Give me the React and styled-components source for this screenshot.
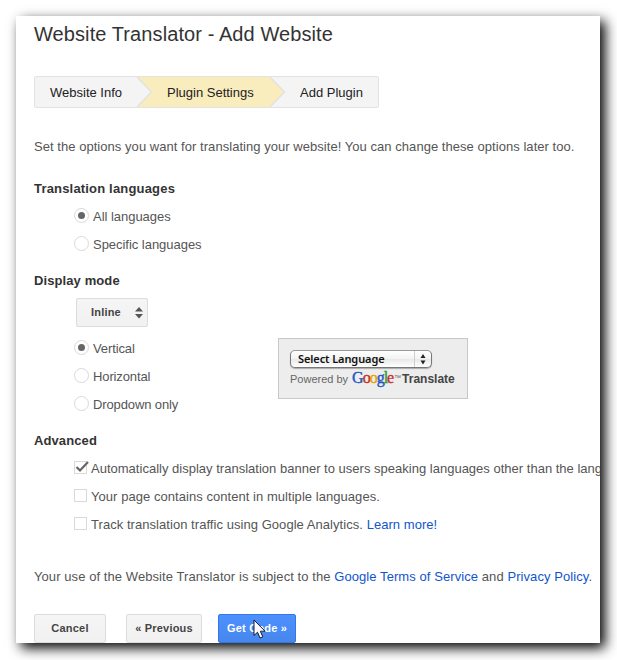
import { useState } from "react"
import styled, { createGlobalStyle } from "styled-components"

const GlobalStyle = createGlobalStyle`
  body {
    margin: 0;
    background: #fff;
    overflow: hidden;
  }
  * {
    box-sizing: border-box;
  }
`;

const Page = styled.div`
  height: 660px;
  padding: 16px;
  font-family: "Liberation Sans", Arial, sans-serif;
  font-size: 13px;
  color: #555;
`;

const Panel = styled.div`
  width: 584px;
  height: 627px;
  padding-left: 18px;
  overflow: hidden;
  background: #fff;
  box-shadow: 5px 5px 12px #000;
`;

const Title = styled.h1`
  height: 36px;
  margin: 0 0 24px;
  font-size: 20px;
  font-weight: 400;
  line-height: 36px;
  letter-spacing: 0.09px;
  color: #333;
`;

const Steps = styled.div`
  display: flex;
  width: 345px;
  height: 32px;
  border: 1px solid #e2e2e2;
  border-radius: 2px;
  background: #f4f4f4;
`;

const Step = styled.div`
  display: flex;
  justify-content: space-between;
  width: ${(props) => props.width}px;
  padding-left: ${(props) => props.indent}px;
  line-height: 31px;
  color: #222;
  white-space: nowrap;
  background: ${(props) => (props.active ? "#f9edbe" : "#f4f4f4")};
`;

const Text = styled.p`
  margin: ${(props) => props.top}px 0 0;
  line-height: 28px;
  letter-spacing: ${(props) => props.spacing}px;
  white-space: nowrap;
`;

const Heading = styled.h2`
  margin: ${(props) => props.top}px 0 0;
  padding-top: 1px;
  height: 28px;
  font-size: 13px;
  font-weight: 700;
  line-height: 28px;
  letter-spacing: ${(props) => props.spacing || 0.1}px;
  color: #333;
`;

const Options = styled.div`
  padding-left: 40px;
`;

const Option = styled.label`
  display: flex;
  align-items: center;
  gap: ${(props) => props.gap}px;
  height: 28px;
  letter-spacing: ${(props) => props.spacing}px;
  white-space: nowrap;
`;

const Radio = styled.span`
  display: flex;
  align-items: center;
  justify-content: center;
  width: 15px;
  height: 15px;
  margin-bottom: 2px;
  border: 1px solid #d9d9d9;
  border-radius: 50%;
  &::after {
    content: "";
    width: 7px;
    height: 7px;
    border-radius: 50%;
    background: ${(props) => (props.checked ? "#666" : "transparent")};
  }
`;

const Checkbox = styled.span`
  width: 13px;
  height: 13px;
  margin-bottom: 2px;
  border: 1px solid #d9d9d9;
  svg {
    display: block;
    overflow: visible;
  }
`;

const Link = styled.a`
  color: #15c;
  text-decoration: none;
`;

const Button = styled.button`
  width: ${(props) => props.width}px;
  height: 29px;
  padding: 0;
  border: 1px solid ${(props) => (props.primary ? "#3079ed" : "#dcdcdc")};
  border-radius: 2px;
  font-family: inherit;
  font-size: 11px;
  font-weight: 700;
  line-height: 27px;
  letter-spacing: 0.2px;
  color: ${(props) => (props.primary ? "#fff" : "#444")};
  background: ${(props) =>
    props.primary
      ? "linear-gradient(#4d90fe, #4787ed)"
      : "linear-gradient(#f5f5f5, #f1f1f1)"};
`;

const ModeSelect = styled(Button)`
  display: flex;
  align-items: center;
  justify-content: space-between;
  margin: 4px 0 7px 42px;
  padding: 0 4px 0 14px;
`;

const DisplayRow = styled.div`
  display: flex;
  align-items: flex-start;
`;

const ModeOptions = styled(Options)`
  width: 244px;
`;

const Preview = styled.div`
  width: 190px;
  height: 61px;
  margin-top: 4px;
  padding: 11px 0 0 11px;
  border: 1px solid #c8c8c8;
  background: #ededed;
`;

const LanguageSelect = styled.div`
  display: flex;
  width: 142px;
  height: 18px;
  border: 1px solid #777;
  border-top-color: #999;
  border-radius: 5px;
  background: linear-gradient(#fff, #f3f3f3 50%, #e8e8e8 51%, #fff);
  box-shadow: 0 1px 1px #aaa;
  font-family: "Noto Sans", sans-serif;
  font-size: 11px;
  font-weight: 600;
  line-height: 16px;
  letter-spacing: -0.1px;
  color: #111;
`;

const LanguageLabel = styled.span`
  width: 124px;
  padding-left: 7px;
  border-right: 1px solid #ccc;
`;

const Powered = styled.div`
  display: flex;
  align-items: baseline;
  font-size: 11px;
  line-height: 20px;
  color: #666;
  white-space: nowrap;
`;

const Logo = styled.span`
  width: 42px;
  margin-left: 4px;
  font-family: "Liberation Serif", serif;
  font-size: 16px;
  letter-spacing: -1px;
`;

const Letter = styled.span`
  color: ${(props) => props.color};
  -webkit-text-stroke: 0.4px ${(props) => props.color};
`;

const Trademark = styled.span`
  width: 8px;
  font-size: 7px;
  position: relative;
  top: -3px;
`;

const Product = styled.b`
  font-size: 12px;
  color: #444;
`;

const Buttons = styled.div`
  display: flex;
  margin-top: 23px;
`;

const PreviousButton = styled(Button)`
  margin: 0 16px 0 20px;
`;

const Primary = styled.div`
  position: relative;
`;

const Cursor = styled.svg`
  position: absolute;
  left: 35px;
  top: 5px;
`;

const Chevron = ({ from, to }) => (
  <svg width="16" height="30">
    <path d="M0 0H16V30H0Z" fill={to} />
    <path d="M0 0L14.5 15L0 30Z" fill={from} />
    <path d="M0 0L14.5 15L0 30" fill="none" stroke="#e0e0e0" strokeWidth="1.3" />
  </svg>
);

const Arrows = ({ width, height, color }) => (
  <svg width={width} height={height} viewBox="0 0 8 12">
    <path d="M4 0L8 4.5H0Z M0 7H8L4 11.5Z" fill={color} />
  </svg>
);

const googleLetters = [
  ["G", "#2456c4"],
  ["o", "#c9302c"],
  ["o", "#dfa800"],
  ["g", "#2456c4"],
  ["l", "#2f9a3b"],
  ["e", "#c9302c"],
];

const languageOptions = ["All languages", "Specific languages"];
const modes = ["Vertical", "Horizontal", "Dropdown only"];

const App = () => {
  const [language, setLanguage] = useState(languageOptions[0])
  const [mode, setMode] = useState(modes[0])
  const [advanced, setAdvanced] = useState([true, false, false])

  const toggle = (index) => {
    setAdvanced(advanced.map((value, i) => (i === index ? !value : value)))
  }

  const advancedLabels = [
    "Automatically display translation banner to users speaking languages other than the language of your page.",
    "Your page contains content in multiple languages.",
    <span key="track">
      Track translation traffic using Google Analytics. <Link>Learn more!</Link>
    </span>,
  ];

  return (
    <Page>
      <GlobalStyle />
      <Panel>
        <Title>Website Translator - Add Website</Title>
        <Steps>
          <Step width={118} indent={15}>
            Website Info
            <Chevron from="#f4f4f4" to="#f9edbe" />
          </Step>
          <Step width={133} indent={14} active>
            Plugin Settings
            <Chevron from="#f9edbe" to="#f4f4f4" />
          </Step>
          <Step width={92} indent={14}>Add Plugin</Step>
        </Steps>
        <Text top={25} spacing={0.045}>
          Set the options you want for translating your website! You can change these options later too.
        </Text>

        <Heading top={13} spacing={0.18}>Translation languages</Heading>
        <Options>
          {languageOptions.map((item) => (
            <Option key={item} gap={4} spacing={-0.03} onClick={() => setLanguage(item)}>
              <Radio checked={language === item} />
              {item}
            </Option>
          ))}
        </Options>

        <Heading top={8}>Display mode</Heading>
        <ModeSelect width={72}>
          Inline
          <Arrows width={8} height={12} color="#555" />
        </ModeSelect>
        <DisplayRow>
          <ModeOptions>
            {modes.map((item) => (
              <Option key={item} gap={4} spacing={-0.12} onClick={() => setMode(item)}>
                <Radio checked={mode === item} />
                {item}
              </Option>
            ))}
          </ModeOptions>
          <Preview>
            <LanguageSelect>
              <LanguageLabel>Select Language</LanguageLabel>
              <svg width="16" height="16">
                <path d="M8 3L10.5 7H5.5Z M5.5 9.5H10.5L8 13.5Z" fill="#222" />
              </svg>
            </LanguageSelect>
            <Powered>
              Powered by
              <Logo>
                {googleLetters.map(([letter, color], i) => (
                  <Letter key={i} color={color}>{letter}</Letter>
                ))}
              </Logo>
              <Trademark>™</Trademark>
              <Product>Translate</Product>
            </Powered>
          </Preview>
        </DisplayRow>

        <Heading top={8}>Advanced</Heading>
        <Options>
          {advancedLabels.map((label, i) => (
            <Option key={i} gap={4} spacing={i === 0 ? 0.01 : 0.05} onClick={() => toggle(i)}>
              <Checkbox>
                {advanced[i] && (
                  <svg width="11" height="11">
                    <path d="M1.5 5L5 8.5L13 0" fill="none" stroke="#666" strokeWidth="2.2" />
                  </svg>
                )}
              </Checkbox>
              {label}
            </Option>
          ))}
        </Options>

        <Text top={25} spacing={0.075}>
          Your use of the Website Translator is subject to the{" "}
          <Link>Google Terms of Service</Link> and <Link>Privacy Policy</Link>.
        </Text>
        <Buttons>
          <Button width={72}>Cancel</Button>
          <PreviousButton width={76}>« Previous</PreviousButton>
          <Primary>
            <Button width={78} primary>Get Code »</Button>
            <Cursor width="13" height="21">
              <path
                d="M1 1V16.5L4.5 13.2L7 19L9.8 17.8L7.3 12.2H12Z"
                fill="#fff"
                stroke="#111a33"
                strokeWidth="1"
              />
            </Cursor>
          </Primary>
        </Buttons>
      </Panel>
    </Page>
  );
};

export default App;
